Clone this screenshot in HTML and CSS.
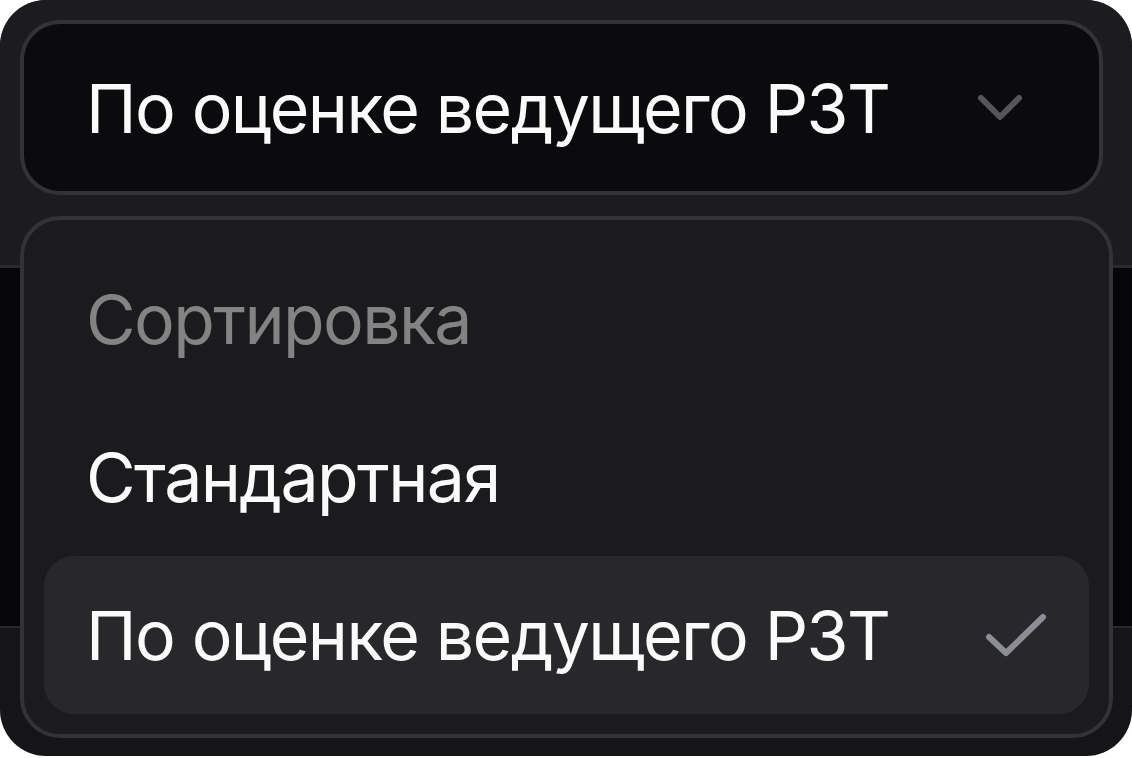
FILE: index.html
```html
<!DOCTYPE html>
<html lang="ru">
<head>
    <meta charset="UTF-8">
    <meta name="viewport" content="width=device-width, initial-scale=1.0">
    <title>Сортировка</title>
    <link rel="stylesheet" href="styles.css">
</head>
<body>
    <div class="frame">
        <div class="top">
            <button class="trigger">
                <span>По оценке ведущего РЗТ</span>
                <svg class="chevron" width="44" height="25" viewBox="0 0 44 25">
                    <path d="M3 3 L22 22 L41 3" fill="none" stroke="#55555b" stroke-width="6" stroke-linecap="round" stroke-linejoin="round"/>
                </svg>
            </button>
        </div>
        <div class="band"></div>
        <div class="bottom"></div>

        <!-- open dropdown -->
        <div class="menu">
            <div class="menu-label">Сортировка</div>
            <div class="menu-item">Стандартная</div>
            <div class="menu-item selected">
                <span>По оценке ведущего РЗТ</span>
                <svg class="check" width="62" height="44" viewBox="0 0 62 44">
                    <path d="M4 24 L21 40 L58 4" fill="none" stroke="#8d8d95" stroke-width="6" stroke-linecap="round" stroke-linejoin="round"/>
                </svg>
            </div>
        </div>
    </div>
</body>
</html>
```

FILE: styles.css
```css
* {
    box-sizing: border-box;
}

body {
    margin: 0;
    background-color: #ffffff;
    font-family: Inter, "Noto Sans", sans-serif;
}

.frame {
    position: relative;
    width: 1132px;
    height: 756px;
    border-radius: 46px;
    overflow: hidden;
    background-color: #151517;
    display: flex;
    flex-direction: column;
}

.top {
    height: 268px;
    padding: 20px 29px 0 20px;
    background-color: #1c1c1e;
    border-bottom: 3px solid #2a2a2d;
}

.band {
    height: 360px;
    background-color: #060608;
    border-bottom: 2px solid #2a2a2d;
}

.bottom {
    flex: 1;
}

.trigger {
    width: 100%;
    height: 175px;
    display: flex;
    align-items: center;
    justify-content: space-between;
    padding: 0 77px 0 62px;
    background-color: #0b0b0d;
    border: 4px solid #333336;
    border-radius: 40px;
    color: #fafafa;
    font-family: inherit;
    font-size: 68px;
    letter-spacing: -1.6px;
    text-align: left;
}

.menu {
    position: absolute;
    left: 20px;
    top: 216px;
    width: 1093px;
    padding: 20px;
    background-color: #1b1b1d;
    border: 4px solid #333336;
    border-radius: 40px;
}

.menu-label,
.menu-item {
    height: 158px;
    display: flex;
    align-items: center;
    justify-content: space-between;
    padding: 0 44px 0 42px;
    font-size: 68px;
    letter-spacing: -1.6px;
    color: #fafafa;
}

.menu-label {
    color: #838383;
}

.menu-item.selected {
    background-color: #28282b;
    border-radius: 30px;
    padding-right: 42px;
}
```
